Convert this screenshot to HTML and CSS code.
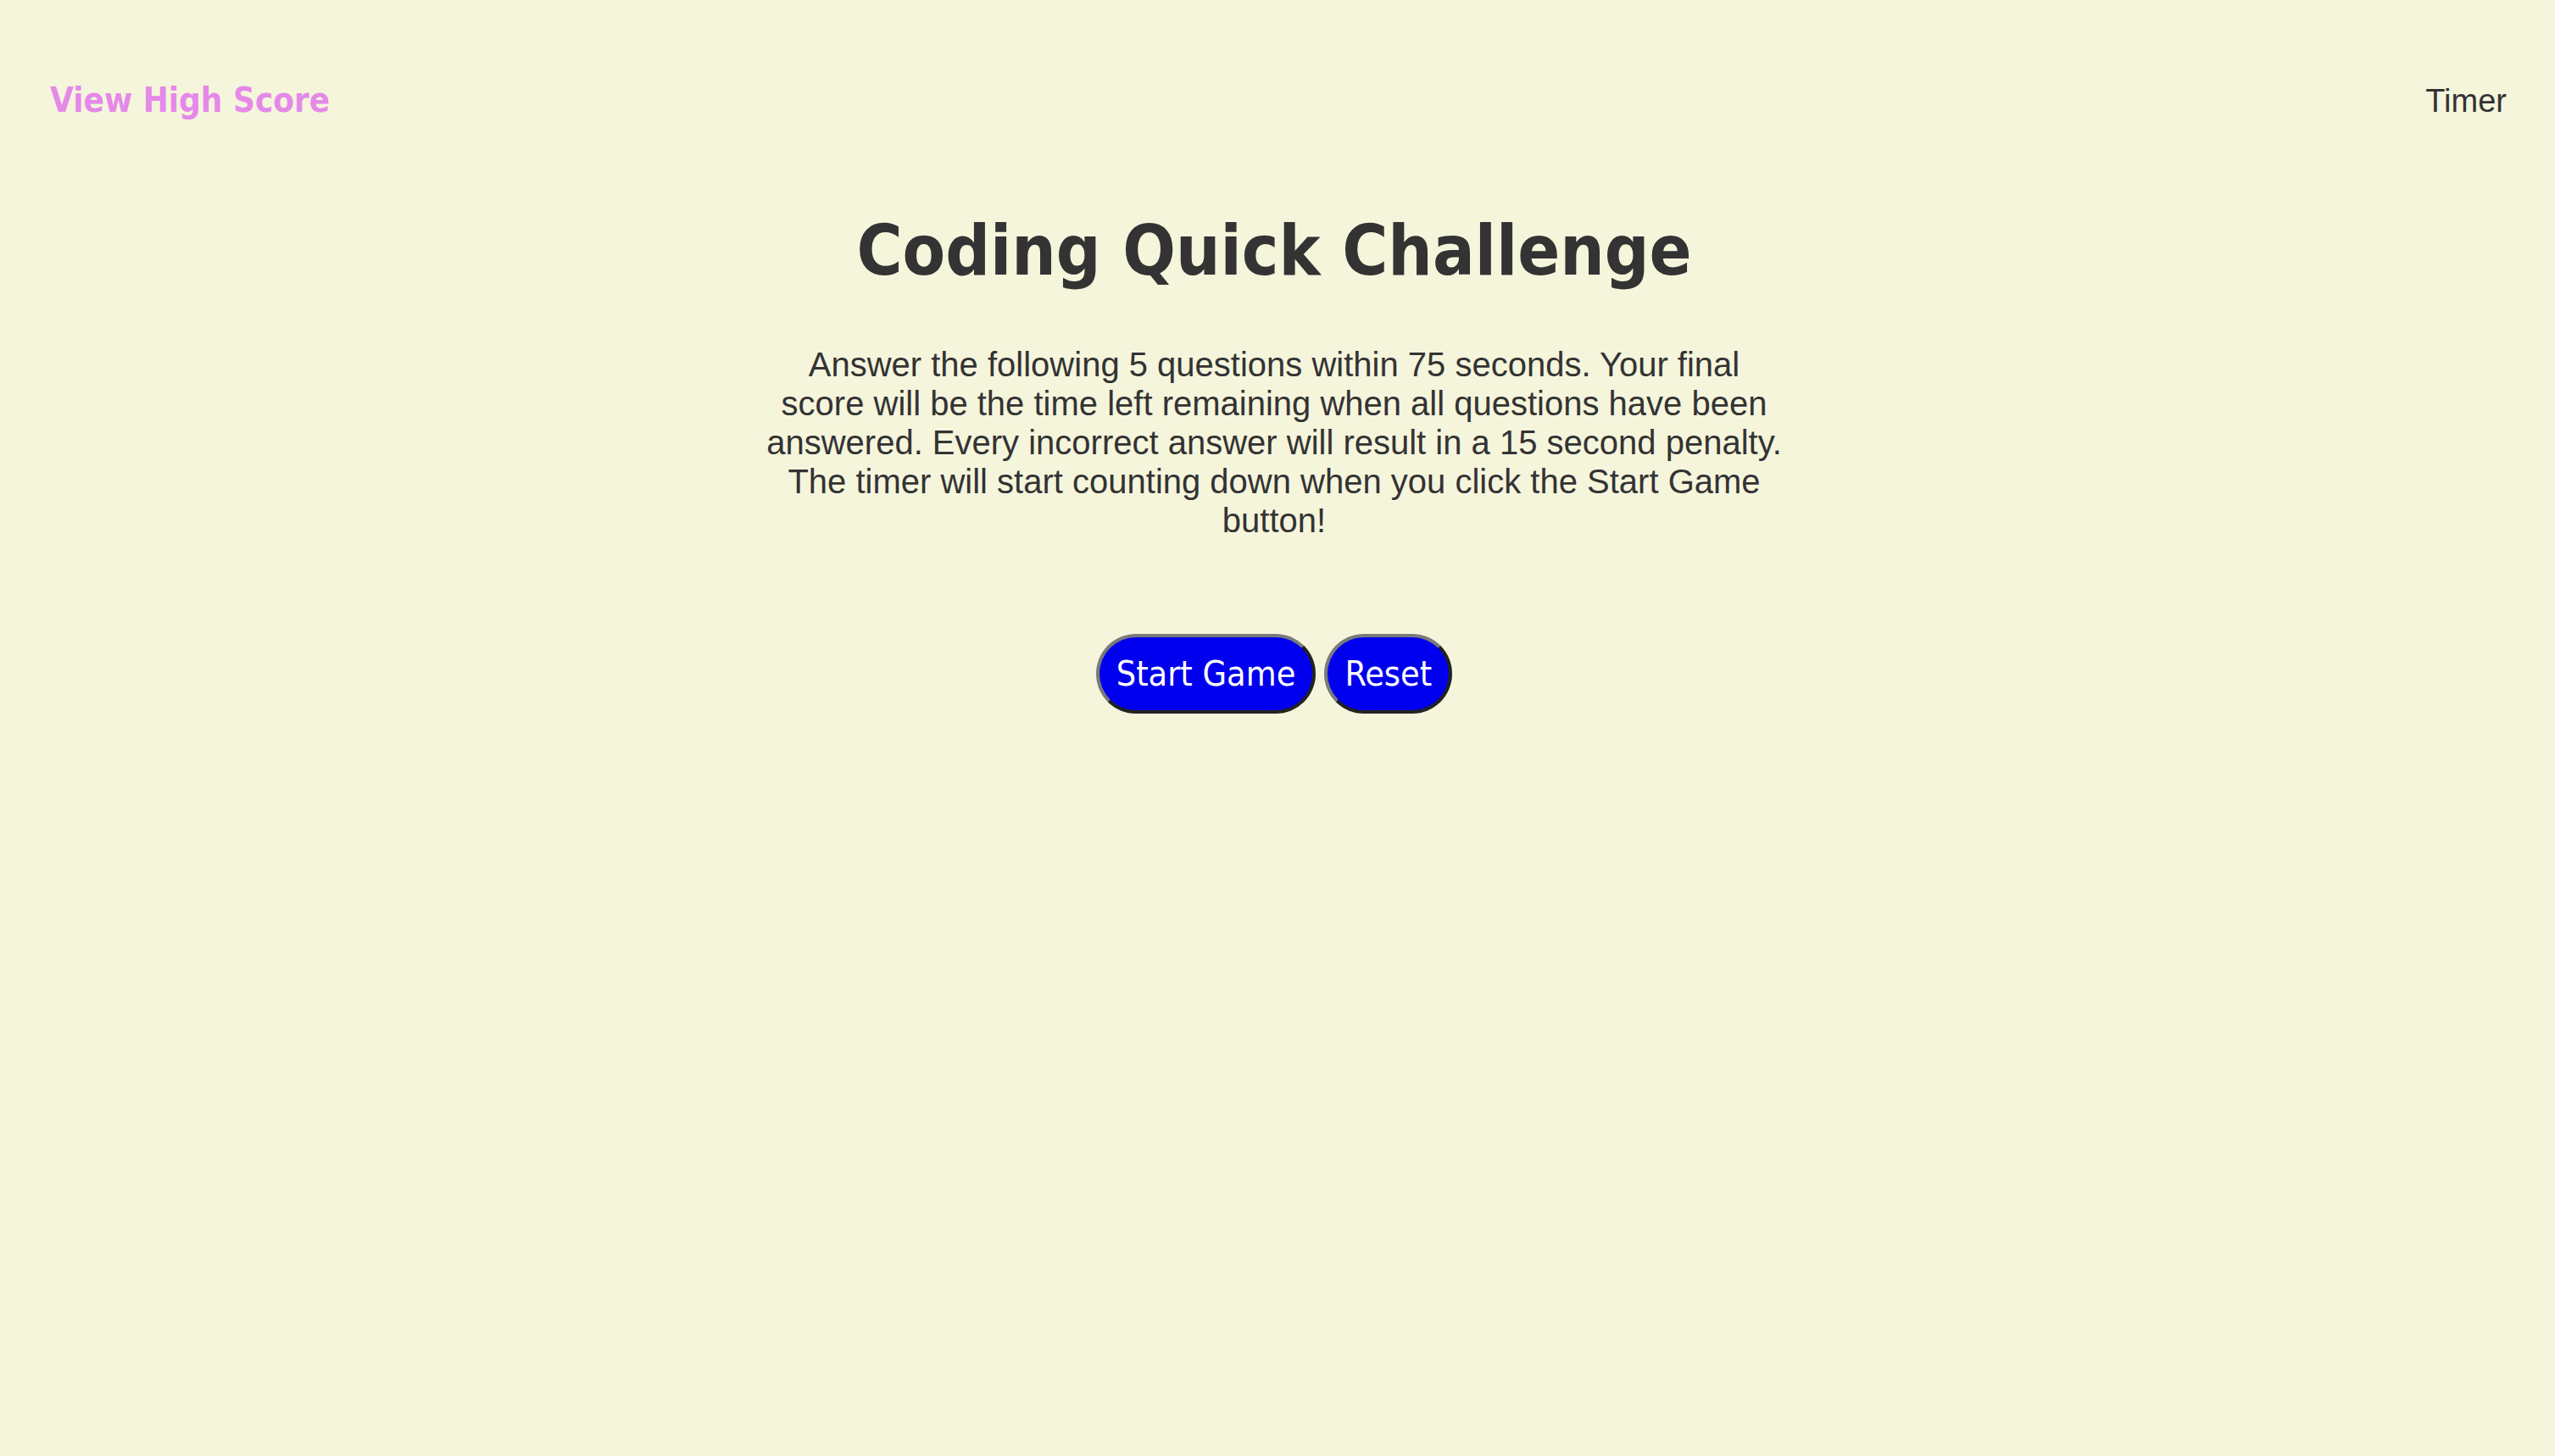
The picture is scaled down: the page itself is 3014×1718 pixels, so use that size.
FILE: index.html
```html
<!DOCTYPE html>
<html lang="en">
<head>
<meta charset="utf-8">
<title>Coding Quick Challenge</title>
<link rel="stylesheet" href="styles.css">
</head>
<body>
<header class="top-bar">
  <a class="high-score" href="#">View High Score</a>
  <div class="timer">Timer</div>
</header>
<main class="intro">
  <h1 class="title">Coding Quick Challenge</h1>
  <p class="rules">Answer the following 5 questions within 75 seconds. Your final score will be the time left remaining when all questions have been answered. Every incorrect answer will result in a 15 second penalty. The timer will start counting down when you click the Start Game button!</p>
  <div class="actions">
    <button class="btn">Start Game</button>
    <button class="btn">Reset</button>
  </div>
</main>
</body>
</html>
```
FILE: styles.css
```css
html, body {
  margin: 0;
  padding: 0;
  background: #f5f5dc;
  color: #333333;
  min-height: 100vh;
}
body {
  font-family: "Liberation Sans", Arial, sans-serif;
}
.top-bar {
  display: flex;
  justify-content: space-between;
  align-items: baseline;
  padding: 94px 57px 0 59px;
  line-height: 48px;
}
.high-score {
  font-family: "DejaVu Sans Condensed", "DejaVu Sans", sans-serif;
  font-weight: bold;
  font-size: 40px;
  color: #e589e9;
  text-decoration: none;
}
.timer {
  font-family: "Liberation Sans", sans-serif;
  font-size: 38px;
  color: #333333;
}
.intro {
  display: flex;
  flex-direction: column;
  align-items: center;
  padding-right: 8px;
}
.title {
  font-family: "DejaVu Sans Condensed", "DejaVu Sans", sans-serif;
  font-weight: bold;
  font-size: 82px;
  line-height: 96px;
  margin: 105px 0 0;
}
.rules {
  width: 1201px;
  margin: 63px 0 0;
  font-size: 40px;
  line-height: 46px;
  text-align: center;
}
.actions {
  display: flex;
  gap: 10px;
  margin-top: 111px;
}
.btn {
  font-family: "DejaVu Sans Condensed", "DejaVu Sans", sans-serif;
  font-size: 41px;
  line-height: 1;
  color: #ffffff;
  background: #0000ee;
  border: 4px solid #7a7a7a;
  border-right-color: #222222;
  border-bottom-color: #222222;
  border-radius: 48px;
  height: 94px;
  padding: 0 20px;
}
```
